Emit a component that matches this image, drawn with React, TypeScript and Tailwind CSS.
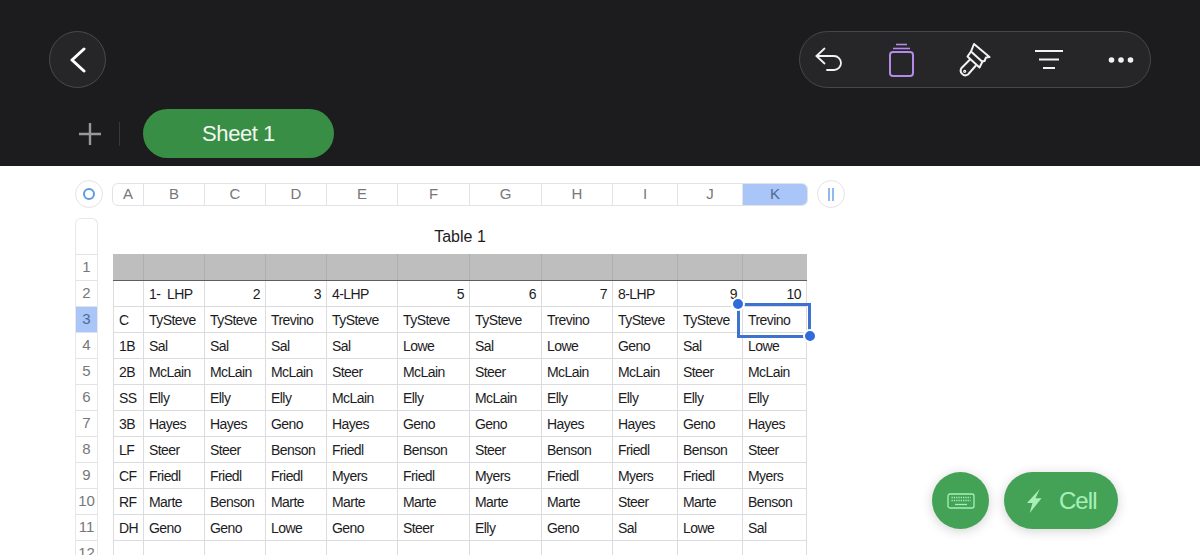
const font = "font-['Liberation_Sans',Arial,sans-serif]";

const columns = [
    { label: "A", width: "w-[30px]" },
    { label: "B", width: "w-[61px]" },
    { label: "C", width: "w-[61px]" },
    { label: "D", width: "w-[61px]" },
    { label: "E", width: "w-[71px]" },
    { label: "F", width: "w-[72px]" },
    { label: "G", width: "w-[72px]" },
    { label: "H", width: "w-[71px]" },
    { label: "I", width: "w-[65px]" },
    { label: "J", width: "w-[65px]" },
    { label: "K", width: "w-[65px]" },
];

const rightAligned = ["2", "3", "5", "6", "7", "9", "10"];

const rows = [
    ["", "1-  LHP", "2", "3", "4-LHP", "5", "6", "7", "8-LHP", "9", "10"],
    ["C", "TySteve", "TySteve", "Trevino", "TySteve", "TySteve", "TySteve", "Trevino", "TySteve", "TySteve", "Trevino"],
    ["1B", "Sal", "Sal", "Sal", "Sal", "Lowe", "Sal", "Lowe", "Geno", "Sal", "Lowe"],
    ["2B", "McLain", "McLain", "McLain", "Steer", "McLain", "Steer", "McLain", "McLain", "Steer", "McLain"],
    ["SS", "Elly", "Elly", "Elly", "McLain", "Elly", "McLain", "Elly", "Elly", "Elly", "Elly"],
    ["3B", "Hayes", "Hayes", "Geno", "Hayes", "Geno", "Geno", "Hayes", "Hayes", "Geno", "Hayes"],
    ["LF", "Steer", "Steer", "Benson", "Friedl", "Benson", "Steer", "Benson", "Friedl", "Benson", "Steer"],
    ["CF", "Friedl", "Friedl", "Friedl", "Myers", "Friedl", "Myers", "Friedl", "Myers", "Friedl", "Myers"],
    ["RF", "Marte", "Benson", "Marte", "Marte", "Marte", "Marte", "Marte", "Steer", "Marte", "Benson"],
    ["DH", "Geno", "Geno", "Lowe", "Geno", "Steer", "Elly", "Geno", "Sal", "Lowe", "Sal"],
    ["", "", "", "", "", "", "", "", "", "", ""],
];

function Toolbar() {
    return (
        <div className="flex h-[57px] w-[352px] items-center rounded-full border border-[#47474a] bg-[#262628] pl-[14px]">
            <svg width="30" height="30" viewBox="0 0 30 30" fill="none" stroke="#f2f2f2" strokeWidth="1.8" strokeLinecap="round" strokeLinejoin="round">
                <path d="M10.5 3.5 2.5 11l8 7.5" />
                <path d="M2.5 11h17.5a7 7 0 0 1 0 14h-7" />
            </svg>
            <svg width="28" height="36" viewBox="0 0 28 36" fill="none" stroke="#b48ae8" strokeWidth="2" className="ml-[44px]">
                <rect x="2" y="10" width="23" height="24" rx="3" />
                <path d="M5 6.5h17" strokeWidth="1.6" />
                <path d="M8 2.5h11" strokeWidth="1.6" />
            </svg>
            <svg width="32" height="36" viewBox="0 0 32 36" fill="none" stroke="#f2f2f2" strokeWidth="2" strokeLinejoin="round" strokeLinecap="round" className="ml-[43px]">
                <path d="M15 2 30.500 15 27 15.500 25.500 19 23 19.500 12 9.500Z" />
                <path d="M12 9.500 8.500 14.500 20.500 25.500 23.500 19.500" />
                <path d="M11 17.500 2.500 26A4.700 4.700 0 0 0 9 32.500L16.500 24" />
                <circle cx="5.700" cy="29.300" r="1" strokeWidth="1.200" />
            </svg>
            <svg width="30" height="22" viewBox="0 0 30 22" fill="none" stroke="#f2f2f2" strokeWidth="2" className="ml-[43px]">
                <path d="M1 2h28M5 10.500h20M9 19h12" />
            </svg>
            <svg width="26" height="8" viewBox="0 0 26 8" fill="#f2f2f2" className="ml-[44px]">
                <circle cx="3.500" cy="4" r="2.800" />
                <circle cx="13" cy="4" r="2.800" />
                <circle cx="22.500" cy="4" r="2.800" />
            </svg>
        </div>
    );
}

function Header() {
    return (
        <header className="h-[166px] bg-[#1c1c1e] text-white">
            <div className="flex h-[109px] items-start justify-between pl-[49px] pr-[49px] pt-[31px]">
                <button className="flex h-[57px] w-[57px] items-center justify-center rounded-full border border-[#4a4a4d] bg-[#262628]">
                    <svg width="18" height="26" viewBox="0 0 18 26" fill="none" stroke="#ffffff" strokeWidth="3" strokeLinecap="round" strokeLinejoin="round">
                        <path d="M15 2 3 13l12 11" />
                    </svg>
                </button>
                <Toolbar />
            </div>
            <div className="flex items-center pl-[78px]">
                <svg width="24" height="24" viewBox="0 0 24 24" fill="none" stroke="#98989b" strokeWidth="2.400">
                    <path d="M12 1v22M1 12h22" />
                </svg>
                <div className="ml-[17px] h-[24px] w-px bg-[#38383a]" />
                <div className="ml-[23px] flex h-[49px] w-[191px] items-center justify-center rounded-[25px] bg-[#388e44] text-[22px] tracking-[-0.02em] text-[#f0f7f0]">
                    Sheet 1
                </div>
            </div>
        </header>
    );
}

function ColumnBar() {
    return (
        <div className="flex items-center">
            <div className="flex h-[28px] w-[28px] items-center justify-center rounded-full border border-[#e3e3e6] bg-white">
                <div className="h-[12px] w-[12px] rounded-full border-2 border-[#5b9be0]" />
            </div>
            <div className="ml-[9px] flex h-[23px] overflow-hidden rounded-[6px] border border-[#e3e3e6]">
                {columns.map((column, i) => (
                    <div
                        key={column.label}
                        className={`flex items-center justify-center text-[15px] ${column.width} ${
                            column.label === "K"
                                ? "bg-[#aac6f8] text-[#4d6a94]"
                                : "text-[#77777a]"
                        } ${i > 0 ? "border-l border-[#e3e3e6]" : ""}`}
                    >
                        {column.label}
                    </div>
                ))}
            </div>
            <div className="ml-[9px] flex h-[28px] w-[28px] items-center justify-center gap-[2px] rounded-full border border-[#e3e3e6] bg-white">
                <div className="h-[13px] w-[2px] bg-[#8fbaee]" />
                <div className="h-[13px] w-[2px] bg-[#8fbaee]" />
            </div>
        </div>
    );
}

function RowNumbers() {
    const numbers = Array.from({ length: 12 }, (_, i) => i + 1);
    return (
        <div className="w-[23px] rounded-t-[6px] border-x border-t border-[#e8e8ea] bg-white">
            <div className="h-[35px]" />
            {numbers.map((n) => (
                <div
                    key={n}
                    className={`flex h-[26px] items-center justify-center border-t border-[#e3e3e6] text-[15px] ${
                        n === 3 ? "bg-[#aac6f8] text-[#4d6a94]" : "text-[#77777a]"
                    }`}
                >
                    {n}
                </div>
            ))}
        </div>
    );
}

function SheetTable() {
    return (
        <div className="relative w-[694px]">
            <div className="flex h-[36px] items-start justify-center pt-[7px] text-[16px] text-[#1c1c1e]">
                Table 1
            </div>
            <div className="flex h-[27px] border-b border-[#5e5e60] bg-[#bdbebd]">
                {columns.map((column, i) => (
                    <div
                        key={column.label}
                        className={`${column.width} ${i > 0 ? "border-l border-[#aeafae]" : ""}`}
                    />
                ))}
            </div>
            {rows.map((row, r) => (
                <div key={r} className="flex h-[26px] border-b border-[#dcdcde]">
                    {row.map((cell, c) => (
                        <div
                            key={c}
                            className={`flex items-center border-l border-[#dcdcde] px-[5px] text-[14px] leading-none tracking-[-0.04em] whitespace-pre text-[#1c1c1e] [font-kerning:normal] ${columns[c].width} ${
                                c === 10 ? "border-r" : ""
                            } ${r === 0 && rightAligned.includes(cell) ? "justify-end" : ""}`}
                        >
                            {cell}
                        </div>
                    ))}
                </div>
            ))}
            {/* selection frame on K3 */}
            <div className="absolute left-[624px] top-[85px] h-[35px] w-[74px] border-[3px] border-[#3d73ce]" />
            <div className="absolute left-[618px] top-[79px] h-[14px] w-[14px] rounded-full border-2 border-white bg-[#2f6bdc]" />
            <div className="absolute left-[690px] top-[111px] h-[14px] w-[14px] rounded-full border-2 border-white bg-[#2f6bdc]" />
        </div>
    );
}

export default function App() {
    return (
        <div className={`relative h-[555px] w-[1200px] overflow-hidden bg-white ${font}`}>
            <Header />
            <main className="pl-[75px] pt-[14px]">
                <ColumnBar />
                <div className="mt-[10px] flex">
                    <RowNumbers />
                    <div className="ml-[15px]">
                        <SheetTable />
                    </div>
                </div>
            </main>
            <div className="absolute left-[932px] top-[472px] flex gap-[15px]">
                <button className="flex h-[57px] w-[57px] items-center justify-center rounded-full bg-[#44a257] shadow-[0_2px_12px_rgba(0,0,0,0.18)]">
                    <svg width="28" height="16" viewBox="0 0 28 16" fill="none" stroke="#a8f0b8">
                        <rect x="1" y="1" width="26" height="14" rx="2" strokeWidth="1.300" />
                        <path d="M4.500 4.500h19M4.500 7.500h19" strokeWidth="1.300" strokeDasharray="1.300 1" />
                        <path d="M8 11.500h12" strokeWidth="1.300" />
                    </svg>
                </button>
                <button className="flex h-[57px] w-[114px] items-center rounded-full bg-[#44a257] pl-[23px] text-[24px] tracking-[-0.04em] text-[#a8f0b8] shadow-[0_2px_12px_rgba(0,0,0,0.18)]">
                    <svg width="15" height="24" viewBox="0 0 15 24" fill="#a8f0b8">
                        <path d="M12.700 0 0 14h5.500L2.700 24 14.500 9.300H8.500Z" />
                    </svg>
                    <span className="ml-[17px]">Cell</span>
                </button>
            </div>
        </div>
    );
}
